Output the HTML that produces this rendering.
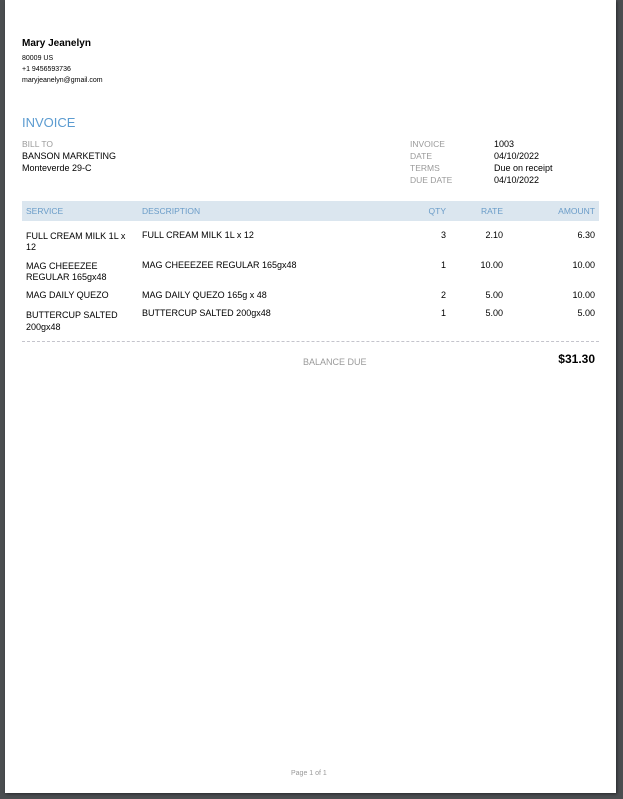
<!DOCTYPE html>
<html><head><meta charset="utf-8"><style>
*{margin:0;padding:0;box-sizing:border-box}
body{width:623px;height:799px;background:#4b4e51;position:relative;overflow:hidden;font-family:"Liberation Sans",Arial,sans-serif;color:#000}
#pg{position:absolute;left:5px;top:0;width:611px;height:793px;background:#fff;box-shadow:1px 1px 3px rgba(0,0,0,.5)}
.a{position:absolute;white-space:nowrap;line-height:1}
.s{font-size:9px}
.x{font-size:7px}
.g{color:#9a9a9a;font-size:8.5px}
.b{color:#6a9cc8;font-size:8.5px}
.r{text-align:right}
</style></head><body>
<div id="pg"></div>
<div class="a" style="left:22px;top:39px;font-size:10px;font-weight:bold">Mary Jeanelyn</div>
<div class="a x" style="left:22px;top:55px">80009 US</div>
<div class="a x" style="left:22px;top:66px">+1 9456593736</div>
<div class="a x" style="left:22px;top:77px">maryjeanelyn@gmail.com</div>
<div class="a" style="left:22px;top:116px;font-size:13px;color:#5b9bd0">INVOICE</div>
<div class="a g" style="left:22px;top:140px">BILL TO</div>
<div class="a s" style="left:22px;top:152px">BANSON MARKETING</div>
<div class="a s" style="left:22px;top:164px">Monteverde 29-C</div>
<div class="a g" style="left:410px;top:140px">INVOICE</div>
<div class="a g" style="left:410px;top:152px">DATE</div>
<div class="a g" style="left:410px;top:164px">TERMS</div>
<div class="a g" style="left:410px;top:176px">DUE DATE</div>
<div class="a s" style="left:494px;top:140px">1003</div>
<div class="a s" style="left:494px;top:152px">04/10/2022</div>
<div class="a s" style="left:494px;top:164px">Due on receipt</div>
<div class="a s" style="left:494px;top:176px">04/10/2022</div>
<div class="a" style="left:22px;top:201px;width:577px;height:20px;background:#dbe6ef"></div>
<div class="a b" style="left:26px;top:207px">SERVICE</div>
<div class="a b" style="left:142px;top:207px">DESCRIPTION</div>
<div class="a b r" style="left:400px;top:207px;width:46px">QTY</div>
<div class="a b r" style="left:450px;top:207px;width:53px">RATE</div>
<div class="a b r" style="left:520px;top:207px;width:75px">AMOUNT</div>
<div class="a s" style="left:26px;top:231px;line-height:11px">FULL CREAM MILK 1L x<br>12</div>
<div class="a s" style="left:142px;top:231px">FULL CREAM MILK 1L x 12</div>
<div class="a s" style="left:26px;top:261px;line-height:11px">MAG CHEEEZEE<br>REGULAR 165gx48</div>
<div class="a s" style="left:142px;top:261px">MAG CHEEEZEE REGULAR 165gx48</div>
<div class="a s" style="left:26px;top:291px">MAG DAILY QUEZO</div>
<div class="a s" style="left:142px;top:291px">MAG DAILY QUEZO 165g x 48</div>
<div class="a s" style="left:26px;top:309px;line-height:12px">BUTTERCUP SALTED<br>200gx48</div>
<div class="a s" style="left:142px;top:309px">BUTTERCUP SALTED 200gx48</div>
<div class="a s r" style="left:400px;top:231px;width:46px">3</div>
<div class="a s r" style="left:450px;top:231px;width:53px">2.10</div>
<div class="a s r" style="left:520px;top:231px;width:75px">6.30</div>
<div class="a s r" style="left:400px;top:261px;width:46px">1</div>
<div class="a s r" style="left:450px;top:261px;width:53px">10.00</div>
<div class="a s r" style="left:520px;top:261px;width:75px">10.00</div>
<div class="a s r" style="left:400px;top:291px;width:46px">2</div>
<div class="a s r" style="left:450px;top:291px;width:53px">5.00</div>
<div class="a s r" style="left:520px;top:291px;width:75px">10.00</div>
<div class="a s r" style="left:400px;top:309px;width:46px">1</div>
<div class="a s r" style="left:450px;top:309px;width:53px">5.00</div>
<div class="a s r" style="left:520px;top:309px;width:75px">5.00</div>
<div class="a" style="left:22px;top:341px;width:577px;border-top:1px dashed #c4c4cc"></div>
<div class="a" style="left:303px;top:358px;font-size:9px;color:#9a9a9a">BALANCE DUE</div>
<div class="a r" style="left:500px;top:353px;width:95px;font-size:12px;font-weight:bold">$31.30</div>
<div class="a" style="left:291px;top:770px;font-size:7px;color:#999">Page 1 of 1</div>
</body></html>
